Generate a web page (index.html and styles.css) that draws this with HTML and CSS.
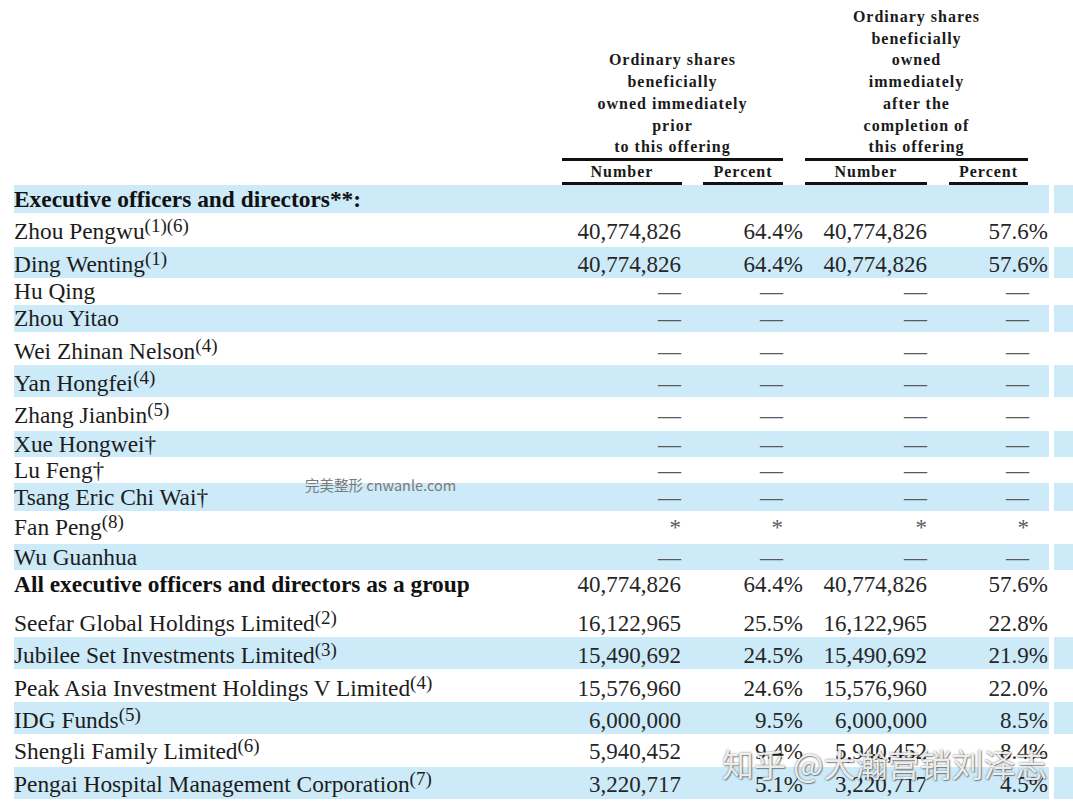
FILE: index.html
```html
<!DOCTYPE html>
<html>
<head>
<meta charset="utf-8">
<link rel="stylesheet" href="styles.css">
</head>
<body>
<div class="page">
  <div class="head">
    <div class="grp g1">Ordinary shares<br>beneficially<br>owned immediately<br>prior<br>to this offering</div>
    <div class="grp g2">Ordinary shares<br>beneficially<br>owned<br>immediately<br>after the<br>completion of<br>this offering</div>
    <div class="lbl c-n1">Number</div>
    <div class="lbl c-p1">Percent</div>
    <div class="lbl c-n2">Number</div>
    <div class="lbl c-p2">Percent</div>
  </div>

  <div class="row blue h28"><div class="cells"><div class="nm b">Executive officers and directors**:</div></div><div class="tail"></div></div>

  <div class="row h34 lift2"><div class="cells"><div class="nm">Zhou Pengwu<sup>(1)(6)</sup></div><div class="n1">40,774,826</div><div class="p1">64.4%</div><div class="n2">40,774,826</div><div class="p2">57.6%</div></div><div class="tail"></div></div>

  <div class="row blue h31"><div class="cells"><div class="nm">Ding Wenting<sup>(1)</sup></div><div class="n1">40,774,826</div><div class="p1">64.4%</div><div class="n2">40,774,826</div><div class="p2">57.6%</div></div><div class="tail"></div></div>

  <div class="row h27"><div class="cells"><div class="nm">Hu Qing</div><div class="n1 dash">—</div><div class="p1 dash">—</div><div class="n2 dash">—</div><div class="p2 dash">—</div></div><div class="tail"></div></div>

  <div class="row blue h27"><div class="cells"><div class="nm">Zhou Yitao</div><div class="n1 dash">—</div><div class="p1 dash">—</div><div class="n2 dash">—</div><div class="p2 dash">—</div></div><div class="tail"></div></div>

  <div class="row h33"><div class="cells"><div class="nm">Wei Zhinan Nelson<sup>(4)</sup></div><div class="n1 dash">—</div><div class="p1 dash">—</div><div class="n2 dash">—</div><div class="p2 dash">—</div></div><div class="tail"></div></div>

  <div class="row blue h32"><div class="cells"><div class="nm">Yan Hongfei<sup>(4)</sup></div><div class="n1 dash">—</div><div class="p1 dash">—</div><div class="n2 dash">—</div><div class="p2 dash">—</div></div><div class="tail"></div></div>

  <div class="row h34 lift2"><div class="cells"><div class="nm">Zhang Jianbin<sup>(5)</sup></div><div class="n1 dash">—</div><div class="p1 dash">—</div><div class="n2 dash">—</div><div class="p2 dash">—</div></div><div class="tail"></div></div>

  <div class="row blue h26"><div class="cells"><div class="nm">Xue Hongwei†</div><div class="n1 dash">—</div><div class="p1 dash">—</div><div class="n2 dash">—</div><div class="p2 dash">—</div></div><div class="tail"></div></div>

  <div class="row h26"><div class="cells"><div class="nm">Lu Feng†</div><div class="n1 dash">—</div><div class="p1 dash">—</div><div class="n2 dash">—</div><div class="p2 dash">—</div></div><div class="tail"></div></div>

  <div class="row blue h28"><div class="cells"><div class="nm">Tsang Eric Chi Wai†</div><div class="n1 dash">—</div><div class="p1 dash">—</div><div class="n2 dash">—</div><div class="p2 dash">—</div></div><div class="tail"></div></div>

  <div class="row h33 lift5"><div class="cells"><div class="nm">Fan Peng<sup>(8)</sup></div><div class="n1 dash"><span class="star">*</span></div><div class="p1 dash"><span class="star">*</span></div><div class="n2 dash"><span class="star">*</span></div><div class="p2 dash"><span class="star">*</span></div></div><div class="tail"></div></div>

  <div class="row blue h26"><div class="cells"><div class="nm">Wu Guanhua</div><div class="n1 dash">—</div><div class="p1 dash">—</div><div class="n2 dash">—</div><div class="p2 dash">—</div></div><div class="tail"></div></div>

  <div class="row h33 lift5"><div class="cells"><div class="nm b">All executive officers and directors as a group</div><div class="n1">40,774,826</div><div class="p1">64.4%</div><div class="n2">40,774,826</div><div class="p2">57.6%</div></div><div class="tail"></div></div>

  <div class="row h34"><div class="cells"><div class="nm">Seefar Global Holdings Limited<sup>(2)</sup></div><div class="n1">16,122,965</div><div class="p1">25.5%</div><div class="n2">16,122,965</div><div class="p2">22.8%</div></div><div class="tail"></div></div>

  <div class="row blue h32"><div class="cells"><div class="nm">Jubilee Set Investments Limited<sup>(3)</sup></div><div class="n1">15,490,692</div><div class="p1">24.5%</div><div class="n2">15,490,692</div><div class="p2">21.9%</div></div><div class="tail"></div></div>

  <div class="row h33"><div class="cells"><div class="nm">Peak Asia Investment Holdings V Limited<sup>(4)</sup></div><div class="n1">15,576,960</div><div class="p1">24.6%</div><div class="n2">15,576,960</div><div class="p2">22.0%</div></div><div class="tail"></div></div>

  <div class="row blue h32"><div class="cells"><div class="nm">IDG Funds<sup>(5)</sup></div><div class="n1">6,000,000</div><div class="p1">9.5%</div><div class="n2">6,000,000</div><div class="p2">8.5%</div></div><div class="tail"></div></div>

  <div class="row h33 lift2"><div class="cells"><div class="nm">Shengli Family Limited<sup>(6)</sup></div><div class="n1">5,940,452</div><div class="p1">9.4%</div><div class="n2">5,940,452</div><div class="p2">8.4%</div></div><div class="tail"></div></div>

  <div class="row blue h32 lift1"><div class="cells"><div class="nm">Pengai Hospital Management Corporation<sup>(7)</sup></div><div class="n1">3,220,717</div><div class="p1">5.1%</div><div class="n2">3,220,717</div><div class="p2">4.5%</div></div><div class="tail"></div></div>

  <div class="wm-small">完美整形 cnwanle.com</div>
  <div class="wm-big">知乎 @大瀚营销刘泽志</div>
</div>
</body>
</html>
```
FILE: styles.css
```css
html, body {
  margin: 0;
  padding: 0;
  background: #ffffff;
}

.page {
  position: relative;
  width: 1073px;
  height: 808px;
  overflow: hidden;
  font-family: "Liberation Serif", "Times New Roman", serif;
  color: #222222;
}

.head {
  display: grid;
  grid-template-columns: 548px 120px 21px 80px 22px 122px 22px 79px 21px;
  grid-template-rows: 161px 24px;
  margin-left: 14px;
  font-weight: bold;
  font-size: 16px;
  letter-spacing: 1px;
  color: #1a1a1a;
}

.grp {
  grid-row: 1;
  align-self: end;
  text-align: center;
  line-height: 21.7px;
  border-bottom: 3px solid #111111;
}

.g1 { grid-column: 2 / 5; }
.g2 { grid-column: 6 / 9; }

.lbl {
  grid-row: 2;
  text-align: center;
  line-height: 21px;
  border-bottom: 3px solid #111111;
}

.c-n1 { grid-column: 2; }
.c-p1 { grid-column: 4; }
.c-n2 { grid-column: 6; }
.c-p2 { grid-column: 8; }

.row {
  display: flex;
  margin-left: 14px;
}

.cells {
  display: grid;
  grid-template-columns: 548px 120px 21px 80px 22px 122px 22px 79px 21px;
  width: 1035px;
  align-items: end;
  font-size: 23px;
  line-height: 27px;
}

.tail {
  width: 19px;
  margin-left: 5px;
}

.blue .cells,
.blue .tail {
  background: #cdeaf8;
}

.h26 { height: 26px; }
.h27 { height: 27px; }
.h28 { height: 28px; }
.h31 { height: 31px; }
.h32 { height: 32px; }
.h33 { height: 33px; }
.h34 { height: 34px; }

.lift1 .cells { padding-bottom: 1px; }
.lift2 .cells { padding-bottom: 2px; }
.lift5 .cells { padding-bottom: 5px; }

.nm {
  grid-column: 1;
  white-space: nowrap;
  color: #1c1c1c;
  font-size: 23.4px;
}

.b {
  font-weight: bold;
  color: #111111;
}

sup {
  font-size: 19px;
  line-height: 0;
  vertical-align: 7px;
}

.n1, .p1, .n2, .p2 {
  text-align: right;
  white-space: nowrap;
  color: #262626;
}

.n1 { grid-column: 2; padding-right: 1px; }
.p1 { grid-column: 4 / 6; padding-right: 2px; }
.n2 { grid-column: 6; }
.p2 { grid-column: 8 / 10; padding-right: 1px; }

.dash {
  color: #5a5a5a;
}

.p1.dash { padding-right: 22px; }
.p2.dash { padding-right: 20px; }

.star {
  vertical-align: -3px;
}

.wm-small {
  position: absolute;
  left: 305px;
  top: 475px;
  font-family: "Noto Sans CJK SC", "Noto Sans", sans-serif;
  font-size: 14.5px;
  line-height: 20px;
  color: #7a7a7a;
}

.wm-big {
  position: absolute;
  left: 722px;
  top: 745px;
  font-family: "Noto Sans CJK SC", "Noto Sans", sans-serif;
  font-size: 32px;
  line-height: 36px;
  color: rgba(255, 255, 255, 0.9);
  text-shadow: 0 0 2px rgba(0, 0, 0, 0.55), 1px 1px 1px rgba(0, 0, 0, 0.35);
}
```
